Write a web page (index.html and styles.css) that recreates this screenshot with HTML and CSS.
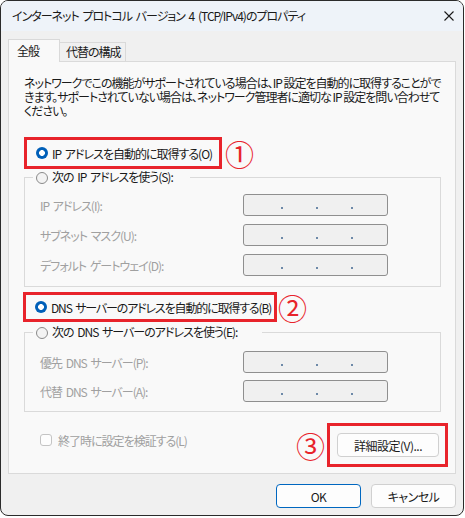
FILE: index.html
```html
<!DOCTYPE html>
<html lang="ja">
<head>
<meta charset="utf-8">
<title>インターネット プロトコル バージョン 4 (TCP/IPv4)のプロパティ</title>
<link rel="stylesheet" href="styles.css">
</head>
<body>
<div class="window">
  <div class="titlebar">
    <span class="title">インターネット プロトコル バージョン 4 (TCP/IPv4)のプロパティ</span>
    <svg class="close" width="10" height="10" viewBox="0 0 10 10"><path d="M0.5 0.5 L9.5 9.5 M9.5 0.5 L0.5 9.5" stroke="#1a1a1a" stroke-width="1.1" fill="none"/></svg>
  </div>
  <div class="content">
    <div class="tabs">
      <div class="tab active">全般</div>
      <div class="tab">代替の構成</div>
    </div>
    <div class="panel">
      <p class="desc">ネットワークでこの機能がサポートされている場合は、IP 設定を自動的に取得することがで<br>きます。サポートされていない場合は、ネットワーク管理者に適切な IP 設定を問い合わせて<br>ください。</p>

      <div class="annot a1">
        <div class="redbox rb1"><span class="radio on"></span><span>IP アドレスを自動的に取得する(O)</span></div>
        <span class="num n1">①</span>
      </div>

      <fieldset class="group g1">
        <legend class="lg1"><span class="radio"></span><span>次の IP アドレスを使う(S):</span></legend>
        <div class="fields">
          <div class="field"><span class="lbl">IP アドレス(I):</span><div class="ip"><i></i><i></i><i></i></div></div>
          <div class="field"><span class="lbl">サブネット マスク(U):</span><div class="ip"><i></i><i></i><i></i></div></div>
          <div class="field"><span class="lbl">デフォルト ゲートウェイ(D):</span><div class="ip"><i></i><i></i><i></i></div></div>
        </div>
      </fieldset>

      <div class="annot a2">
        <div class="redbox rb2"><span class="radio on"></span><span class="tight">DNS サーバーのアドレスを自動的に取得する(B)</span></div>
        <span class="num n2">②</span>
      </div>

      <fieldset class="group g2">
        <legend class="lg2"><span class="radio"></span><span>次の DNS サーバーのアドレスを使う(E):</span></legend>
        <div class="fields">
          <div class="field"><span class="lbl">優先 DNS サーバー(P):</span><div class="ip"><i></i><i></i><i></i></div></div>
          <div class="field"><span class="lbl">代替 DNS サーバー(A):</span><div class="ip"><i></i><i></i><i></i></div></div>
        </div>
      </fieldset>

      <div class="bottom">
        <div class="check"><span class="box"></span><span>終了時に設定を検証する(L)</span></div>
        <div class="adv">
          <span class="num n3">③</span>
          <div class="redbox rb3"><button class="btn adv-btn">詳細設定(V)...</button></div>
        </div>
      </div>
    </div>
    <div class="actions">
      <button class="btn primary">OK</button>
      <button class="btn">キャンセル</button>
    </div>
  </div>
</div>
</body>
</html>
```
FILE: styles.css
```css
* { box-sizing: border-box; }

body {
  margin: 0;
  background: #ffffff;
  font-family: "Noto Sans CJK JP", "Noto Sans", sans-serif;
  font-size: 12px;
  font-feature-settings: "palt";
  letter-spacing: -1px;
  word-spacing: 2px;
  color: #1a1a1a;
}

.window {
  width: 464px;
  height: 516px;
  border: 1px solid #2b2b2b;
  border-radius: 8px;
  overflow: hidden;
  background: #f0f0f0;
  display: flex;
  flex-direction: column;
}

.titlebar {
  flex: none;
  height: 30px;
  background: #eef3f9;
  display: flex;
  align-items: center;
  justify-content: space-between;
  padding: 0 9px 0 11px;
  line-height: 16px;
}

.close { display: block; }

.content {
  flex: 1;
  display: flex;
  flex-direction: column;
  padding: 8px 7px 0;
}

.tabs {
  display: flex;
  align-items: flex-start;
  height: 22px;
  position: relative;
  z-index: 1;
}

.tab {
  height: 19px;
  width: 67px;
  margin-top: 3px;
  margin-left: -1px;
  padding-left: 6px;
  border: 1px solid #d9d9d9;
  border-bottom: none;
  background: #f0f0f0;
  line-height: 18px;
}

.tab.active {
  position: relative;
  z-index: 2;
  height: 23px;
  width: 52px;
  margin: 0;
  padding-left: 8px;
  background: #f9f9f9;
  line-height: 21px;
}

.panel {
  height: 413px;
  border: 1px solid #dadada;
  background: #f9f9f9;
  padding: 14px 7px 0 15px;
}

.desc {
  margin: 0;
  line-height: 14px;
  word-spacing: 0;
  white-space: nowrap;
}

.annot {
  display: flex;
  align-items: center;
}

.redbox {
  border: 3px solid #e8232b;
  display: flex;
  align-items: center;
  white-space: nowrap;
}

.a1 { margin-top: 19px; }
.rb1 { width: 198px; height: 32px; padding-left: 9px; }

.a2 { margin-top: 5px; margin-left: -1px; }
.rb2 { width: 254px; height: 30px; padding-left: 9px; }
.tight { letter-spacing: -1.15px; }

.num {
  color: #e8232b;
  font-size: 29px;
  line-height: 29px;
  letter-spacing: 0;
  font-feature-settings: normal;
}
.n1 { margin-left: 3px; }
.n2 { margin-left: 1px; }
.n3 { margin-right: 2px; }

.radio {
  display: inline-block;
  width: 12px;
  height: 12px;
  border-radius: 50%;
  border: 1px solid #8a8a8a;
  background: #f3f3f3;
  margin-right: 4px;
  flex: none;
  vertical-align: -2px;
}

.radio.on {
  border: none;
  background: radial-gradient(circle, #ffffff 0 2.6px, #005fb8 3.2px);
}

.group {
  width: 417px;
  margin: 0;
  border: 1px solid #dadada;
  min-width: 0;
}

.group legend {
  padding: 0 0 0 3px;
  height: 16px;
  line-height: 16px;
  white-space: nowrap;
}

.lg1 { width: 157px; }
.lg2 { width: 229px; }

.g1 { padding: 9px 0 10px 8px; margin-top: 0; }
.g2 { padding: 11px 0 9px 8px; margin-top: 2px; }

.fields {
  display: flex;
  flex-direction: column;
  gap: 8px;
  padding-left: 7px;
}
.g2 .fields { gap: 7px; }

.field {
  display: flex;
  align-items: center;
  height: 22px;
}

.lbl {
  width: 203px;
  color: #a0a0a0;
  white-space: nowrap;
}

.ip {
  width: 145px;
  height: 22px;
  border: 1px solid #8f8f8f;
  border-radius: 3px;
  background: #f0f0f0;
  display: flex;
  align-items: center;
  padding: 5px 0 0 37px;
  gap: 33px;
}

.ip i {
  display: block;
  width: 2px;
  height: 2px;
  background: #6d89a8;
}

.bottom {
  display: flex;
  justify-content: space-between;
  align-items: center;
  margin-top: 11px;
}

.check {
  display: flex;
  align-items: center;
  margin-left: 16px;
  margin-bottom: 10px;
  color: #a0a0a0;
  white-space: nowrap;
}

.check .box {
  width: 12px;
  height: 12px;
  border: 1px solid #c4c4c4;
  border-radius: 3px;
  background: #fdfdfd;
  margin-right: 6px;
}

.adv {
  display: flex;
  align-items: center;
}

.rb3 {
  width: 121px;
  height: 44px;
  padding-left: 7px;
}

.btn {
  width: 102px;
  height: 24px;
  border: 1px solid #d0d0d0;
  border-radius: 4px;
  background: #fdfdfd;
  font: inherit;
  font-feature-settings: "palt";
  letter-spacing: -0.5px;
  color: #1a1a1a;
  padding: 0;
  white-space: nowrap;
}

.actions {
  display: flex;
  justify-content: flex-end;
  gap: 10px;
  margin-top: 10px;
}

.actions .btn { width: 85px; }

.btn.primary {
  border-color: #0067c0;
}
```
